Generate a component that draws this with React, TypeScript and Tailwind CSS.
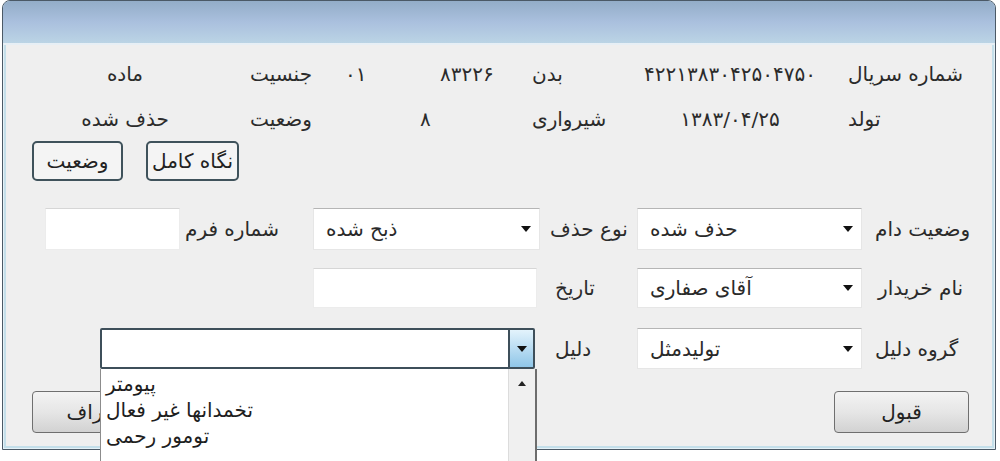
import React from 'react';

const font = "font-['DejaVu_Sans',sans-serif]";

function Arrow() {
  return (
    <svg width="10" height="6" viewBox="0 0 10 6" className="shrink-0">
      <path d="M0 0 H10 L5 6 Z" fill="#111" />
    </svg>
  );
}

function Combo({ value, className }: { value: string; className: string }) {
  return (
    <div
      className={`flex items-center justify-between h-full bg-white border border-[#e6e6e6] border-t-[#b5b5b5] pl-[12px] pr-[8px] ${className}`}
    >
      <span className="text-[20px] leading-none text-[#2a2a2a]">{value}</span>
      <Arrow />
    </div>
  );
}

function TextBox({ className }: { className: string }) {
  return <div className={`h-full bg-white border border-[#ececec] border-t-[#d6d6d6] ${className}`} />;
}

const infoRows = [
  {
    d: 'ماده',
    cLabel: 'جنسیت',
    cValue: '۰۱',
    bValue: '۸۳۲۲۶',
    bPad: 'pl-[25px]',
    bLabel: 'بدن',
    aValue: '۴۲۲۱۳۸۳۰۴۲۵۰۴۷۵۰',
    aLabel: 'شماره سریال',
  },
  {
    d: 'حذف شده',
    cLabel: 'وضعیت',
    cValue: '',
    bValue: '۸',
    bPad: 'pl-[5px]',
    bLabel: 'شیرواری',
    aValue: '۱۳۸۳/۰۴/۲۵',
    aLabel: 'تولد',
  },
];

const reasons = ['پیومتر', 'تخمدانها غیر فعال', 'تومور رحمی'];

export default function App() {
  return (
    <div className={`w-[1000px] h-[461px] bg-white overflow-hidden ${font} text-[20px] leading-none text-[#2b2b2b]`}>
      <div className="ml-[2px] w-[994px] h-[450px] flex flex-col border border-[#4b5966] rounded-t-[8px] bg-[#c4dfea] shadow-[inset_0_0_0_1px_#e4f1f7]">
        {/* title bar */}
        <div className="h-[44px] shrink-0 rounded-t-[7px] bg-gradient-to-b from-[#93adc8] via-[#aac0de] to-[#bbd4e5] border-b-[2px] border-[#e7eff5]" />

        {/* client area */}
        <div className="flex-1 mx-[3px] mb-[3px] bg-[#efefef] flex flex-col">
          {/* info grid */}
          <div className="pt-[6px]">
            {infoRows.map((r, i) => (
              <div key={i} className="flex items-center h-[45px] whitespace-nowrap">
                <div className="ml-[34px] w-[170px] text-center">{r.d}</div>
                <div className="w-[102px] text-right">{r.cLabel}</div>
                <div className="w-[103px] pl-[33px]" dir="ltr">{r.cValue}</div>
                <div className={`w-[115px] ${r.bPad}`} dir="ltr">{r.bValue}</div>
                <div className="w-[90px] pl-[2px]">{r.bLabel}</div>
                <div className="w-[220px] text-center" dir="ltr">{r.aValue}</div>
                <div className="flex-1 pl-[8px]">{r.aLabel}</div>
              </div>
            ))}
          </div>

          {/* action buttons */}
          <div className="flex h-[40px] pl-[26px] gap-[23px]">
            <button className="w-[91px] h-full rounded-[5px] border-2 border-[#3f525b] bg-[#f4f4f4] text-[20px] text-[#222]">
              وضعیت
            </button>
            <button className="w-[93px] h-full rounded-[5px] border-2 border-[#3f525b] bg-[#f4f4f4] text-[20px] text-[#222]">
              نگاه کامل
            </button>
          </div>

          {/* form row 1 */}
          <div className="flex items-center h-[42px] mt-[27px] whitespace-nowrap">
            <TextBox className="ml-[39px] w-[135px]" />
            <div className="w-[133px] pl-[5px]">شماره فرم</div>
            <Combo value="ذبح شده" className="w-[227px]" />
            <div className="w-[97px] pl-[10px]">نوع حذف</div>
            <Combo value="حذف شده" className="w-[225px]" />
            <div className="flex-1 pl-[13px]">وضعیت دام</div>
          </div>

          {/* form row 2 */}
          <div className="flex items-center h-[40px] mt-[18px] whitespace-nowrap">
            <TextBox className="ml-[307px] w-[224px]" />
            <div className="w-[100px] pl-[18px]">تاریخ</div>
            <Combo value="آقای صفاری" className="w-[225px]" />
            <div className="flex-1 pl-[16px]">نام خریدار</div>
          </div>

          {/* form row 3 */}
          <div className="flex items-center h-[41px] mt-[20px] whitespace-nowrap relative z-10">
            <div className="relative ml-[94px] w-[435px] h-full">
              <div className="flex h-full bg-white border-2 border-[#3e4f5a] rounded-[2px]">
                <div className="flex-1" />
                <div className="w-[25px] flex items-center justify-center border-l-2 border-[#3e4f5a] bg-gradient-to-b from-[#e3f3fc] to-[#8fc6e8]">
                  <Arrow />
                </div>
              </div>
              {/* open list */}
              <div className="absolute left-0 top-full w-[437px] h-[100px] flex bg-white border-l border-r-2 border-[#8c8c8c] border-r-[#6d6d6d]">
                <div className="flex-1 pl-[5px] pt-[2px] flex flex-col text-[20px] text-[#1e1e1e] leading-[26px]">
                  {reasons.map((t) => (
                    <div key={t}>{t}</div>
                  ))}
                </div>
                <div className="w-[27px] bg-[#f0f0f0] border-l border-[#dcdcdc] flex justify-center pt-[12px]">
                  <svg width="8" height="5" viewBox="0 0 8 5">
                    <path d="M0 5 L4 0 L8 5 Z" fill="#222" />
                  </svg>
                </div>
              </div>
            </div>
            <div className="w-[102px] pl-[20px]">دلیل</div>
            <Combo value="تولیدمثل" className="w-[225px]" />
            <div className="flex-1 pl-[13px]">گروه دلیل</div>
          </div>

          {/* bottom buttons */}
          <div className="flex justify-between h-[42px] mt-[22px] pl-[26px] pr-[23px]">
            <button className="w-[135px] h-full rounded-[4px] border border-[#6f6f6f] bg-gradient-to-b from-[#f3f3f3] via-[#e6e6e6] to-[#d2d2d2] text-[20px] text-[#222]">
              انصراف
            </button>
            <button className="w-[135px] h-full rounded-[4px] border border-[#6f6f6f] bg-gradient-to-b from-[#f3f3f3] via-[#e6e6e6] to-[#d2d2d2] text-[20px] text-[#222]">
              قبول
            </button>
          </div>
        </div>
      </div>
    </div>
  );
}
